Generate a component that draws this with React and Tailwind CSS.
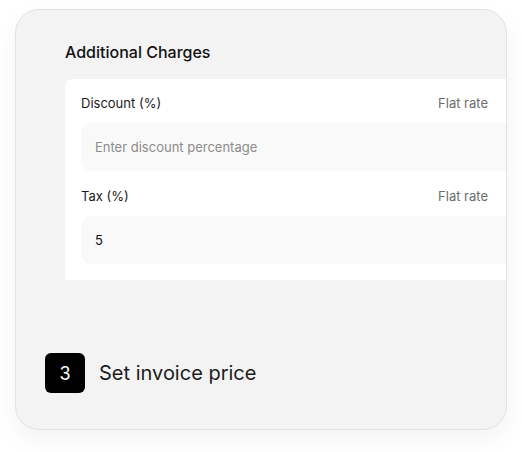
export default function App() {
  const fields = [
    { label: 'Discount (%)', value: '', placeholder: 'Enter discount percentage' },
    { label: 'Tax (%)', value: '5', placeholder: '' },
  ]

  return (
    <div className="w-[522px] h-[452px] bg-white pt-[9px] px-[15px] font-['Inter',sans-serif]">
      <div className="h-[421px] rounded-[24px] border border-[#e2e2e2] bg-[#f3f3f3] shadow-[0_10px_24px_rgba(0,0,0,0.05)] overflow-hidden flex flex-col">
        <h3 className="pl-[49px] pt-[30px] text-[16px] leading-6 font-medium text-[#111]">Additional Charges</h3>
        <div className="ml-[49px] mt-[15px] w-[500px] shrink-0 bg-white rounded-tl-lg px-4 pt-[15px] pb-[16px] flex flex-col">
          {fields.map((f, i) => (
            <div key={f.label} className={i > 0 ? 'mt-4' : ''}>
              <div className="flex items-center justify-between pr-[61px] h-5">
                <span className="text-[13px] text-[#1a1a1a]">{f.label}</span>
                <span className="text-[13px] text-[#6b6b6b]">Flat rate</span>
              </div>
              <input
                readOnly
                value={f.value}
                placeholder={f.placeholder}
                className="mt-[9px] w-full h-12 rounded-[10px] bg-[#f9f9f9] px-[14px] text-[13px] text-[#111] placeholder:text-[#8c8c8c] outline-none"
              />
            </div>
          ))}
        </div>
        <div className="mt-auto mb-[36px] pl-[29px] flex items-center gap-[14px]">
          <div className="w-10 h-10 rounded-md bg-black flex items-center justify-center text-white text-[18px]">3</div>
          <span className="text-[20px] text-[#1c1c1c]">Set invoice price</span>
        </div>
      </div>
    </div>
  )
}
